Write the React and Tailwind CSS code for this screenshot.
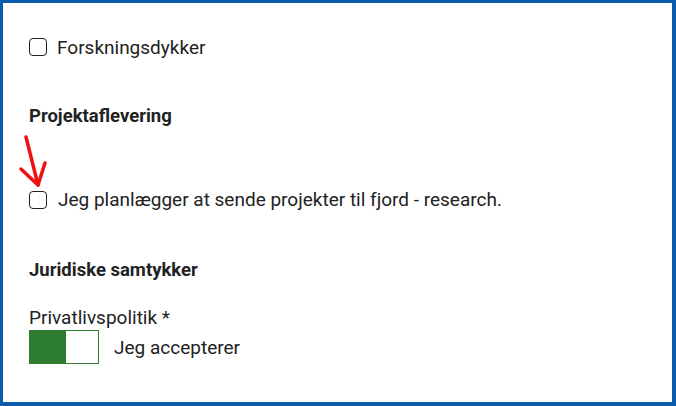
import { useState } from 'react';

function Box({ checked, onChange }) {
    return (
        <button
            type="button"
            onClick={onChange}
            className="w-[18px] h-[18px] shrink-0 rounded-[4px] border-[1.5px] border-[#222] bg-white flex items-center justify-center"
        >
            {checked && <span className="w-[10px] h-[10px] bg-[#222] rounded-[1px]" />}
        </button>
    );
}

function Arrow() {
    return (
        <svg width="40" height="60" viewBox="0 0 40 60" className="absolute left-[10px] top-[128px]" fill="none">
            <path d="M13 6 L25 54" stroke="#f01010" strokeWidth="3.5" strokeLinecap="round" />
            <path d="M8 38 L25 54 L32 32" stroke="#f01010" strokeWidth="3.5" strokeLinecap="round" strokeLinejoin="round" />
        </svg>
    );
}

export default function App() {
    const [diver, setDiver] = useState(false);
    const [deliver, setDeliver] = useState(false);
    const [accept, setAccept] = useState(false);

    return (
        <div className="relative w-[676px] h-[406px] bg-white border-t-[3px] border-l-[3px] border-r-[4px] border-b-[4px] border-[#0b5cad] font-['Roboto',sans-serif] text-[#222]">
            <div className="pl-[26px] pt-[34px]">
                <div className="flex items-center gap-[10px] h-[20px]">
                    <Box checked={diver} onChange={() => setDiver(!diver)} />
                    <span className="text-[19px] leading-none">Forskningsdykker</span>
                </div>

                <h3 className="mt-[50px] text-[18.5px] font-bold leading-none">Projektaflevering</h3>

                <div className="mt-[64px] flex items-center gap-[11px] h-[20px]">
                    <Box checked={deliver} onChange={() => setDeliver(!deliver)} />
                    <span className="text-[19px] leading-none">Jeg planlægger at sende projekter til fjord - research.</span>
                </div>

                <h3 className="mt-[51px] text-[18.5px] font-bold leading-none">Juridiske samtykker</h3>

                <p className="mt-[29px] text-[19px] leading-none">Privatlivspolitik *</p>

                <div className="mt-[3px] flex items-center gap-[15px]">
                    <button
                        type="button"
                        onClick={() => setAccept(!accept)}
                        className="w-[70px] h-[34px] border border-[#2e7d32] flex"
                    >
                        <span className="w-[36px] h-full bg-[#2e7d32]" />
                        <span className="flex-1 h-full bg-white" />
                    </button>
                    <span className="text-[19px] leading-none">Jeg accepterer</span>
                </div>
            </div>
            <Arrow />
        </div>
    );
}
